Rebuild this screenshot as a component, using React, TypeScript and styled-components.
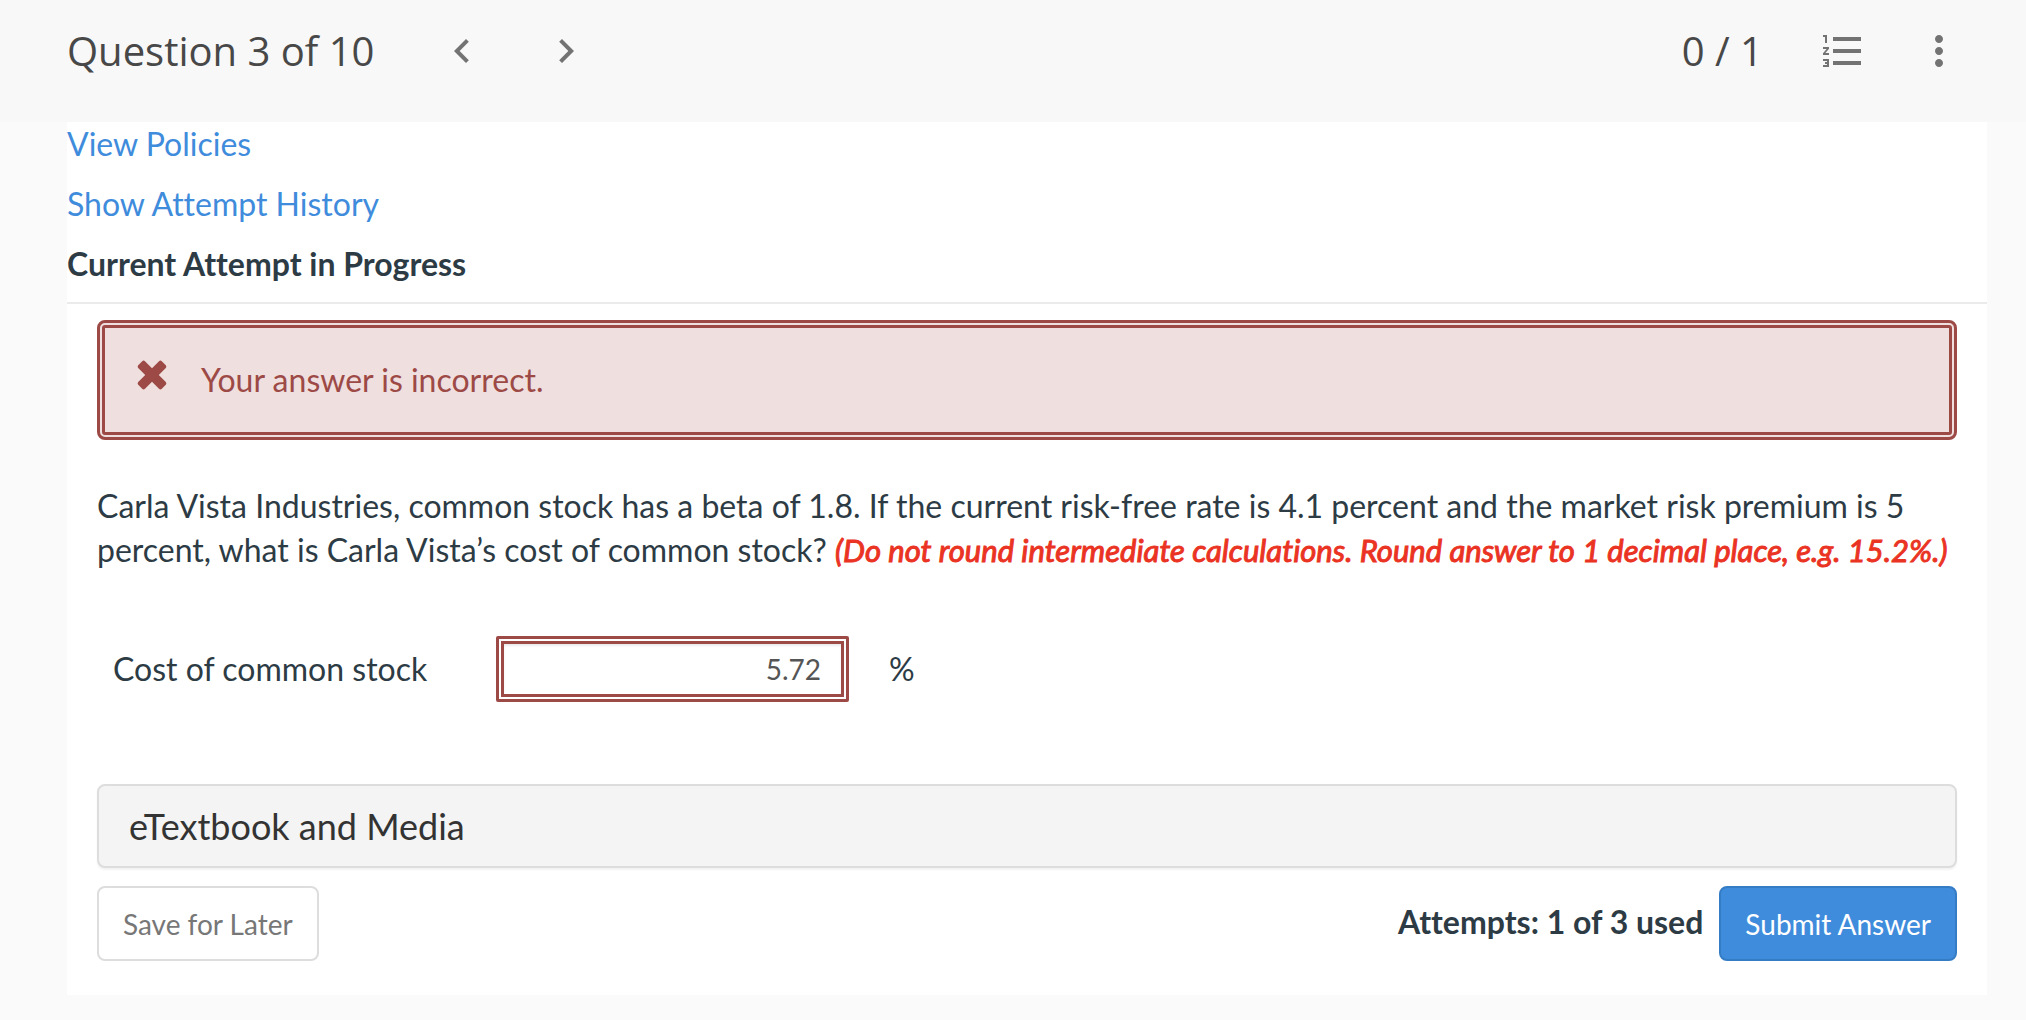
import React from "react";
import styled, { createGlobalStyle } from "styled-components";

const GlobalStyle = createGlobalStyle`
  *, *::before, *::after { box-sizing: border-box; }
  body {
    margin: 0;
    background: #fafafa;
    color: #2d3b45;
    font-family: Lato, "Liberation Sans", sans-serif;
    font-size: 32px;
    line-height: 44px;
    font-variant-ligatures: none;
    text-rendering: optimizeLegibility;
  }
  button, input {
    font-family: inherit;
    font-variant-ligatures: inherit;
    text-rendering: inherit;
  }
`;

const Header = styled.header`
  display: flex;
  align-items: center;
  justify-content: space-between;
  height: 122px;
  padding: 0 63px 20px 67px;
  background: #f8f8f8;
  color: #484848;
  font-family: "Open Sans", "Noto Sans", sans-serif;
`;

const HeaderGroup = styled.div<{ $gap: number }>`
  display: flex;
  align-items: center;
  gap: ${(p) => p.$gap}px;
`;

const Title = styled.h1`
  margin: 0;
  font-size: 40px;
  line-height: 56px;
  font-weight: 400;
`;

const Score = styled.span`
  font-size: 40px;
  line-height: 56px;
`;

const Nav = styled.nav`
  display: flex;
  gap: 56px;
`;

const IconButton = styled.button`
  display: flex;
  padding: 0;
  border: 0;
  background: none;
  color: #737373;
  cursor: pointer;

  svg {
    width: 48px;
    height: 48px;
    fill: currentColor;
  }
`;

const Card = styled.main`
  margin: 0 39px 24px 67px;
  background: #fff;
`;

const Intro = styled.div`
  display: flex;
  flex-direction: column;
  align-items: flex-start;
  gap: 16px;
  padding-bottom: 16px;
  border-bottom: 2px solid #ebebeb;
`;

const Link = styled.a`
  color: #3f8cdc;
  text-decoration: none;
`;

const Heading = styled.h2`
  margin: 0;
  font-size: 32px;
  line-height: 44px;
  font-weight: 700;
`;

const Body = styled.div`
  padding: 16px 30px 34px;
`;

const Alert = styled.div`
  display: flex;
  align-items: center;
  gap: 34px;
  height: 120px;
  padding: 0 32px;
  border: 8px double #9d4a46;
  border-radius: 8px;
  background: #efdfdf;
  color: #9d4a46;

  svg {
    width: 30px;
    height: 30px;
    margin-bottom: 10px;
    fill: currentColor;
  }
`;

const Question = styled.p`
  margin: 44px 0 64px;
`;

const Note = styled.em`
  color: #ea3323;
  font-size: 31px;
  font-style: italic;
  -webkit-text-stroke: 1px #ea3323;
`;

const AnswerRow = styled.div`
  display: flex;
  align-items: center;
  margin-bottom: 82px;
  padding-left: 16px;
`;

const AnswerLabel = styled.label`
  width: 383px;
`;

const AnswerInput = styled.input`
  width: 353px;
  height: 66px;
  margin-right: 40px;
  padding: 0 20px;
  border: 8px double #9d4a46;
  border-radius: 2px;
  background: #fff;
  box-shadow: inset 0 2px 2px rgba(0, 0, 0, 0.08);
  color: #555;
  font-size: 28px;
  text-align: right;
`;

const Resource = styled.button`
  display: block;
  width: 100%;
  height: 84px;
  padding: 0 30px;
  border: 2px solid #ddd;
  border-radius: 8px;
  background: #f4f4f4;
  box-shadow: 0 2px 2px rgba(0, 0, 0, 0.05);
  color: #333;
  font-size: 36px;
  line-height: 44px;
  text-align: left;
  cursor: pointer;
`;

const Footer = styled.footer`
  display: flex;
  align-items: center;
  justify-content: space-between;
  margin-top: 18px;
`;

const SubmitGroup = styled.div`
  display: flex;
  align-items: center;
  gap: 16px;
`;

const Attempts = styled.strong`
  padding-bottom: 4px;
  font-weight: 700;
`;

const Button = styled.button<{ $primary?: boolean }>`
  height: 75px;
  padding: 0 24px;
  border: 2px solid ${(p) => (p.$primary ? "#347dc5" : "#ddd")};
  border-radius: 8px;
  background: ${(p) => (p.$primary ? "#3f8cdc" : "#fff")};
  color: ${(p) => (p.$primary ? "#fff" : "#777")};
  font-size: 28px;
  line-height: 40px;
  cursor: pointer;
`;

const Icon = ({ d }: { d: string }) => (
  <svg viewBox="0 0 24 24" aria-hidden="true">
    <path d={d} />
  </svg>
);

const icons = {
  previous: "M15.41 7.41 14 6l-6 6 6 6 1.41-1.41L10.83 12z",
  next: "M10 6 8.59 7.41 13.17 12l-4.58 4.59L10 18l6-6z",
  list: "M2 17h2v.5H3v1h1v.5H2v1h3v-4H2v1zm1-9h1V4H2v1h1v3zm-1 3h1.8L2 13.1v.9h3v-1H3.2L5 10.9V10H2v1zm5-6v2h14V5H7zm0 14h14v-2H7v2zm0-6h14v-2H7v2z",
  more: "M12 8c1.1 0 2-.9 2-2s-.9-2-2-2-2 .9-2 2 .9 2 2 2zm0 2c-1.1 0-2 .9-2 2s.9 2 2 2 2-.9 2-2-.9-2-2-2zm0 6c-1.1 0-2 .9-2 2s.9 2 2 2 2-.9 2-2-.9-2-2-2z",
};

export default function App() {
  return (
    <>
      <GlobalStyle />
      <Header>
        <HeaderGroup $gap={64}>
          <Title>Question 3 of 10</Title>
          <Nav aria-label="Questions">
            <IconButton type="button" aria-label="Previous question">
              <Icon d={icons.previous} />
            </IconButton>
            <IconButton type="button" aria-label="Next question">
              <Icon d={icons.next} />
            </IconButton>
          </Nav>
        </HeaderGroup>
        <HeaderGroup $gap={48}>
          <HeaderGroup $gap={56}>
            <Score>0 / 1</Score>
            <IconButton type="button" aria-label="Question list">
              <Icon d={icons.list} />
            </IconButton>
          </HeaderGroup>
          <IconButton type="button" aria-label="More options">
            <Icon d={icons.more} />
          </IconButton>
        </HeaderGroup>
      </Header>
      <Card>
        <Intro>
          <Link href="#policies">View Policies</Link>
          <Link href="#history">Show Attempt History</Link>
          <Heading>Current Attempt in Progress</Heading>
        </Intro>
        <Body>
          <Alert role="alert">
            <svg viewBox="0 0 30 30" aria-hidden="true">
              <path d="M5.2 1.2 1.2 5.2Q0 6.600 1.200 8L8.200 15 1.200 22Q0 23.400 1.200 24.800L5.200 28.800Q6.600 30 8 28.800L15 21.800 22 28.800Q23.400 30 24.800 28.800L28.800 24.800Q30 23.400 28.800 22L21.800 15 28.800 8Q30 6.600 28.800 5.200L24.800 1.200Q23.400 0 22 1.200L15 8.200 8 1.200Q6.600 0 5.200 1.200Z" />
            </svg>
            <span>Your answer is incorrect.</span>
          </Alert>
          <Question>
            Carla Vista Industries, common stock has a beta of 1.8. If the current risk-free rate is 4.1
            percent and the market risk premium is 5 percent, what is Carla Vista’s cost of common
            stock? <Note>(Do not round intermediate calculations. Round answer to 1 decimal place, e.g. 15.2%.)</Note>
          </Question>
          <AnswerRow>
            <AnswerLabel htmlFor="cost">Cost of common stock</AnswerLabel>
            <AnswerInput id="cost" type="text" inputMode="decimal" defaultValue="5.72" />
            <span>%</span>
          </AnswerRow>
          <Resource type="button">eTextbook and Media</Resource>
          <Footer>
            <Button type="button">Save for Later</Button>
            <SubmitGroup>
              <Attempts>Attempts: 1 of 3 used</Attempts>
              <Button type="button" $primary>
                Submit Answer
              </Button>
            </SubmitGroup>
          </Footer>
        </Body>
      </Card>
    </>
  );
}
